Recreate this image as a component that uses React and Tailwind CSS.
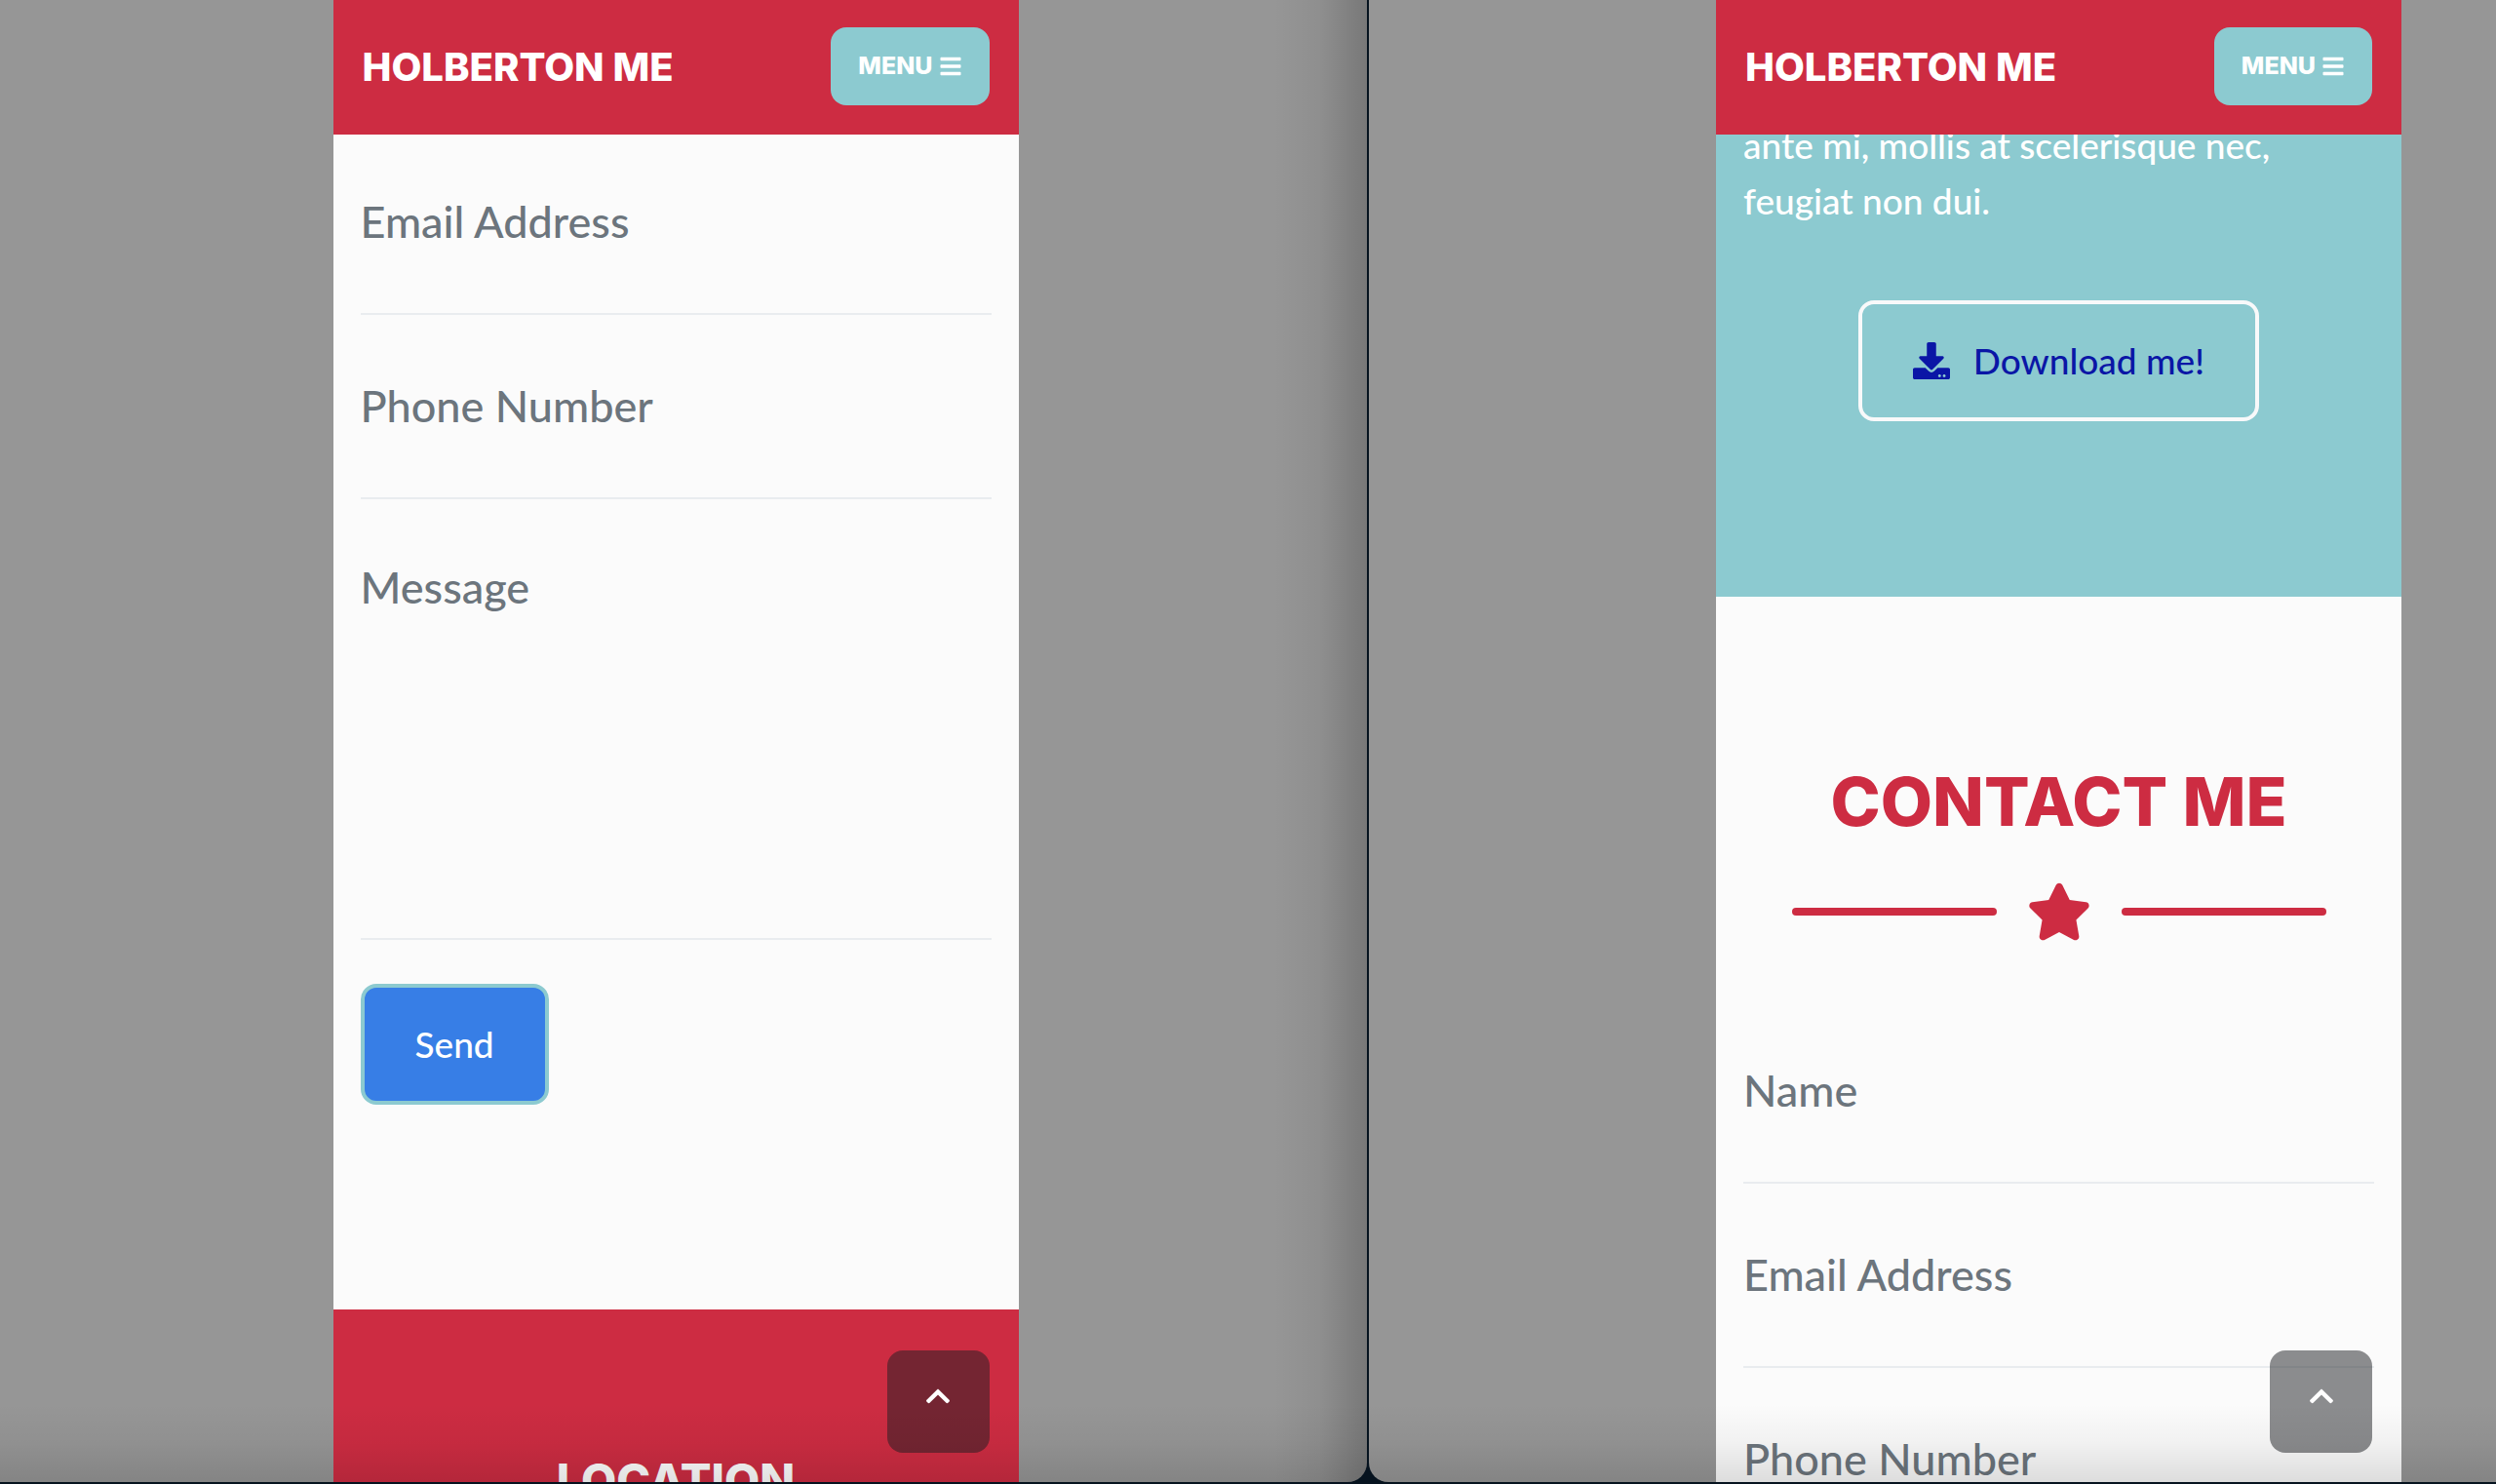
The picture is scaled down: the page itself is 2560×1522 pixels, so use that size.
import { FaBars, FaChevronUp, FaDownload, FaStar } from "react-icons/fa";

function Header() {
  return (
    <header className="relative z-10 flex items-center justify-between bg-[#cd2c42] px-[30px] pt-7 pb-[30px] text-white">
      <a href="#top" className="font-['Inter',sans-serif] text-[40px] leading-[57px] font-extrabold">
        HOLBERTON ME
      </a>
      <button
        type="button"
        className="flex h-20 items-center gap-1.5 rounded-2xl bg-[#8ccad0] px-7 font-['Inter',sans-serif] text-[25px] font-extrabold"
      >
        MENU <FaBars className="size-6" />
      </button>
    </header>
  );
}

const fieldStyle =
  "block w-full border-b-2 border-[#e9ecef] bg-transparent text-[45px] leading-[68px] text-[#212529] placeholder:text-[#6c757d] placeholder:opacity-100 outline-none";

function Field({ label, type = "text" }) {
  return (
    <input type={type} aria-label={label} placeholder={label} className={`${fieldStyle} pt-[59px] pb-[60px]`} />
  );
}

function ScrollTop() {
  return (
    <button
      type="button"
      aria-label="Scroll to top"
      className="absolute right-[30px] bottom-[30px] z-10 flex size-[105px] items-center justify-center rounded-2xl bg-[#1c1d21]/50 pb-3 text-white"
    >
      <FaChevronUp className="size-7" />
    </button>
  );
}

function Phone({ children }) {
  return (
    <div className="relative h-full w-full max-w-[703px] overflow-hidden bg-[#fbfbfb]">
      <Header />
      {children}
      <ScrollTop />
    </div>
  );
}

function BottomShade() {
  return (
    <div className="pointer-events-none absolute inset-x-0 bottom-0 z-20 h-20 bg-gradient-to-t from-black/12 via-black/4 to-transparent" />
  );
}

function FormView() {
  return (
    <Phone>
      <form className="-mt-1 px-7 pb-[210px]">
        <Field label="Email Address" type="email" />
        <Field label="Phone Number" type="tel" />
        <textarea
          aria-label="Message"
          placeholder="Message"
          className={`${fieldStyle} h-[452px] resize-none pt-14`}
        />
        <button
          type="button"
          className="mt-[45px] rounded-2xl border-4 border-[#8ccad0] bg-[#377ee6] px-[52px] py-[29px] text-[37px] leading-[58px] text-white"
        >
          Send
        </button>
      </form>
      <footer className="bg-[#cd2c42] pt-[149px] pb-40 text-center text-white">
        <h2 className="font-['Inter',sans-serif] text-[47px] leading-[52px] font-extrabold">LOCATION</h2>
      </footer>
    </Phone>
  );
}

function ContactView() {
  return (
    <Phone>
      <section className="-mt-[18px] bg-[#8ccad0] px-7 pb-[180px] text-white">
        <p className="text-[37px] leading-[57px]">ante mi, mollis at scelerisque nec, feugiat non dui.</p>
        <div className="mt-[74px] flex justify-center">
          <a
            href="#download"
            className="flex items-center gap-6 rounded-2xl border-4 border-[#f8f9fa] px-[52px] py-[29px] text-[37px] leading-[58px] text-[#0a16a6]"
          >
            <FaDownload className="size-[38px]" />
            Download me!
          </a>
        </div>
      </section>
      <section className="px-7 pt-[171px]">
        <h2 className="text-center font-['Inter',sans-serif] text-[69px] leading-[78px] font-extrabold text-[#cd2c42]">
          CONTACT ME
        </h2>
        <div className="mt-[41px] flex items-center justify-center gap-[31px] text-[#cd2c42]">
          <span className="h-2 w-[210px] rounded-full bg-current" />
          <FaStar className="size-[66px]" />
          <span className="h-2 w-[210px] rounded-full bg-current" />
        </div>
        <form className="pt-[57px]">
          <Field label="Name" />
          <Field label="Email Address" type="email" />
          <Field label="Phone Number" type="tel" />
        </form>
      </section>
    </Phone>
  );
}

export default function App() {
  return (
    <div className="grid h-screen grid-cols-[1402fr_1156fr] gap-[2px] overflow-hidden bg-[#06131f] pb-[2px] font-['Lato',sans-serif] font-medium">
      <main className="relative flex min-h-0 justify-center overflow-hidden rounded-br-[20px] bg-[#969696] pr-4">
        <FormView />
        <div className="pointer-events-none absolute inset-y-0 right-0 z-20 w-24 bg-gradient-to-l from-black/20 via-black/5 to-transparent" />
        <BottomShade />
      </main>
      <main className="relative flex min-h-0 justify-center overflow-hidden rounded-bl-[20px] bg-[#969696] pl-[259px]">
        <ContactView />
        <BottomShade />
      </main>
    </div>
  );
}
